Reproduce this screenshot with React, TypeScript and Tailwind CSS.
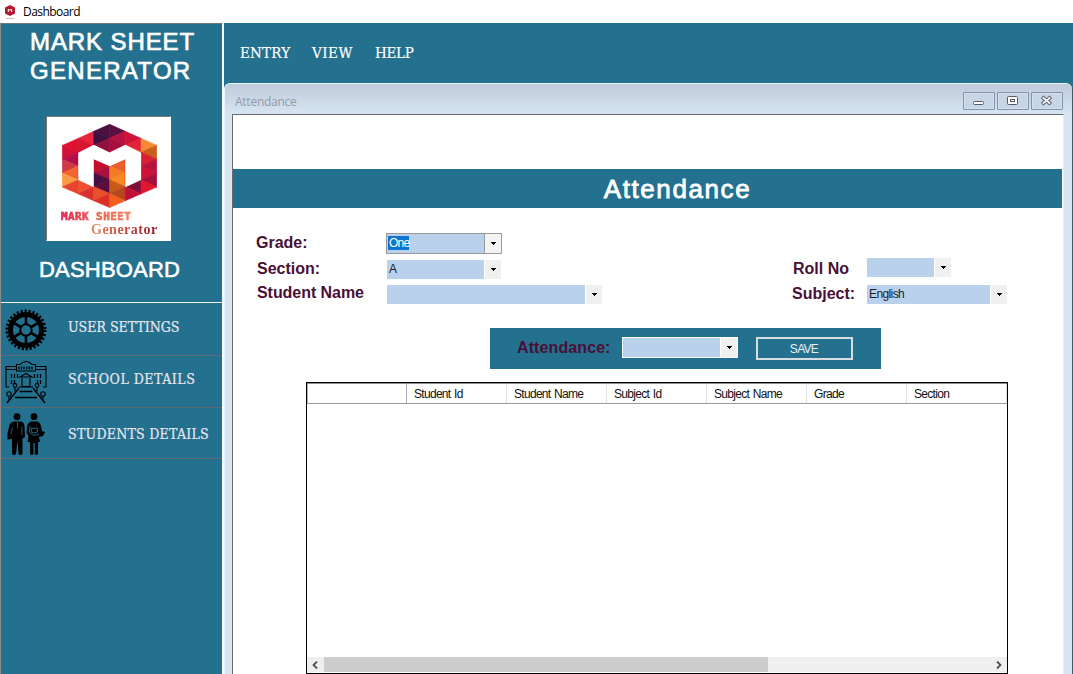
import React from "react";

const arial = "font-['Liberation_Sans',Arial,sans-serif]";
const slab = "font-['DejaVu_Serif_Condensed','DejaVu_Serif',serif] [font-stretch:condensed]";

const columnX = [96, 144, 191, 239, 286, 334, 381];
const columnTop = [120, 99, 78, 57, 78, 99, 120];
const strips: string[][] = [
  ["#df1230", "#d01236", "#b40f4a", "#cf3a48", "#f4652d", "#fb9b46", "#e8432f"],
  ["#e8253a", "#d81433", "#b91538", "#b40f4a", "#e8252f", "#e8252f", "#c62030", "#f05030", "#d93030"],
  ["#4d1040", "#3d1040", "#8f1140", "#b91240", "#c01030", "#c40f2c", "#a5103c", "#4a0f40", "#5c0d3c", "#e8502c", "#dd2f28"],
  ["#5a1040", "#b91240", "#a5103c", "#d01238", "#e01530", "#e8602c", "#f47a28", "#f58a22", "#c85a18", "#b4481c", "#f0601c"],
  ["#c81238", "#d0143c", "#e0253a", "#f0702c", "#ef6a30", "#e8252f", "#e01530", "#7c1038", "#a51038"],
  ["#f59040", "#c8601c", "#df1230", "#b91240", "#cf1038", "#e01530", "#e01530"],
];
strips[5] = ["#f58a30", "#c8601c", "#d82030", "#b91240", "#cf1038", "#a51038", "#e01530"];
strips[4] = ["#d01238", "#e0253a", "#f58a30", "#e8502c", "#e8252f", "#e8252f", "#df1230", "#7c1038", "#c01038"];

function Hexagon({ className }: { className: string }) {
  return (
    <svg viewBox="95 56 287 251" className={className} preserveAspectRatio="none">
      {strips.map((colors, s) => {
        const left = { x: columnX[s], y: columnTop[s] };
        const right = { x: columnX[s + 1], y: columnTop[s + 1] };
        const high = left.y < right.y ? left : right;
        const low = left.y < right.y ? right : left;
        const point = (k: number) =>
          k % 2 === 0 ? `${high.x},${high.y + k * 20.7}` : `${low.x},${low.y + (k - 1) * 20.7}`;
        return colors.map((c, k) => (
          <polygon key={`${s}-${k}`} points={`${point(k)} ${point(k + 1)} ${point(k + 2)}`} fill={c} stroke={c} strokeWidth="2" strokeLinejoin="round" />
        ));
      })}
      <polygon
        fill="#fff"
        points="144,142 191,118 239,141 286,118 334,142 334,223 286,245 286,161 239,182 191,161 191,245 144,223"
      />
    </svg>
  );
}

function GearIcon() {
  return (
    <svg viewBox="0 0 42 42" className="h-[42px] w-[42px]">
      <circle cx="21" cy="21" r="15.5" fill="none" stroke="#000" strokeWidth="5" />
      <circle cx="21" cy="21" r="19" fill="none" stroke="#000" strokeWidth="3" strokeDasharray="2.1 1.88" />
      <circle cx="21" cy="21" r="5.700" fill="none" stroke="#000" strokeWidth="2" />
      {[0, 60, 120, 180, 240, 300].map((a) => (
        <path key={a} d="M21 15V6" stroke="#000" strokeWidth="2.600" transform={`rotate(${a} 21 21)`} />
      ))}
    </svg>
  );
}

function SchoolIcon() {
  return (
    <svg viewBox="0 0 44 44" className="h-11 w-11" fill="none" stroke="#000" strokeWidth="1.100">
      <path d="M5 27H2V6.500H12.500V4.500H16Q22 -1.500 28 4.500H31.500V6.500H42V27H39M2 9.500H12.500M31.500 9.500H42M12.500 6V11H31.500V6" />
      <path d="M15 6.500V9.500M17.500 6.500V9.500M20 6.500V9.500M23 6.500V9.500M25.500 6.500V9.500M28 6.500V9.500" strokeWidth="1.300" />
      <path d="M7.500 14v4M10.500 14v4M13.500 14v4M30.500 14v4M33.500 14v4M36.500 14v4M7.500 20v4M10.500 20v4M33.500 20v4M36.500 20v4" strokeWidth="1.300" />
      <path d="M16 17L22 13.500L28 17ZM18 18V26.500H26V18M15 27H29" />
      <path d="M15 28L3 43M29 28L41 43" strokeWidth="1.400" />
      <path d="M15.500 31.500H28.500M11 37.500H33" strokeWidth="1.500" />
      <circle cx="11" cy="25.500" r="1.900" />
      <circle cx="33" cy="25.500" r="1.900" />
      <circle cx="5" cy="34" r="2.200" />
      <circle cx="39" cy="34" r="2.200" />
      <path d="M11 27.500v4M33 27.500v4M5 36.200v4.500M39 36.200v4.500" />
    </svg>
  );
}

function StudentsIcon() {
  return (
    <svg viewBox="0 0 40 43" className="h-[43px] w-10">
      <circle cx="11" cy="3.700" r="3.400" />
      <path d="M8 8.500H15Q18 9 18.500 13L19 23Q18.500 26 16.500 25V41Q14 43 12.500 41L11.500 27L10 41Q7.500 43 6 41V26L1.500 26.500V20L3.500 12Q4.500 9 8 8.500Z" />
      <path d="M6.500 15L5 21M15.800 14L16 22M11.500 9V15" stroke="#23708f" strokeWidth="0.800" />
      <circle cx="28" cy="3.700" r="3.400" />
      <path d="M25 8.500H31Q34 9 35 13L36 18L39 19L37 23L33 24L34 29H32V41Q30 43 28.800 41V30H27.500V41Q26 43 24 41V29H21.500L22.500 23L20.500 20L21.500 12Q22.500 9 25 8.500Z" />
      <path d="M25 15.500L31 15L31.500 19L26 20ZM24 13L23.500 19L27 22.500L33 21" fill="none" stroke="#23708f" strokeWidth="0.900" />
    </svg>
  );
}

function Combo({ width, value }: { width: string; value?: string }) {
  return (
    <div className={`flex h-[19px] shrink-0 ${width}`}>
      <div className={`h-full flex-1 bg-[#bad1eb] pl-[2px] text-[12px] leading-[19px] tracking-[-0.6px] text-[#1b1b2b] ${arial}`}>
        {value}
      </div>
      <div className="ml-px flex h-full w-4 items-center justify-center bg-[#f0f0f0]">
        <Arrow />
      </div>
    </div>
  );
}

function Arrow() {
  return (
    <svg viewBox="0 0 5 3" className="h-[3px] w-[5px]" shapeRendering="crispEdges">
      <path d="M0 0H5V1H4V2H3V3H2V2H1V1H0Z" />
    </svg>
  );
}

function Label({ children, className }: { children: React.ReactNode; className: string }) {
  return (
    <div className={`shrink-0 whitespace-nowrap text-[16px] leading-[20px] font-bold text-[#4a0f36] ${arial} ${className}`}>{children}</div>
  );
}

function WindowButton({ children }: { children: React.ReactNode }) {
  return (
    <div className="flex h-[18px] w-8 items-center justify-center rounded-[1px] border border-[#8494ae] bg-[#c8d5e4] shadow-[inset_0_0_0_1px_#d4dfec]">
      <svg viewBox="0 0 13 11" className="mr-px mb-px h-[11px] w-[13px]">{children}</svg>
    </div>
  );
}

interface MenuRowProps {
  icon: React.ReactNode;
  label: string;
  iconClass: string;
  textClass: string;
  rowClass: string;
}

function MenuRow({ icon, label, iconClass, textClass, rowClass }: MenuRowProps) {
  return (
    <div className={`flex border-b border-[#5f6a70] ${rowClass}`}>
      <div className={`w-[67px] shrink-0 ${iconClass}`}>{icon}</div>
      <div className={`whitespace-nowrap text-[14px] leading-5 text-[#e9e6ec] [-webkit-text-stroke:0.2px_#e9e6ec] ${slab} ${textClass}`}>{label}</div>
    </div>
  );
}

export default function App() {
  return (
    <div className="flex h-[674px] w-[1073px] flex-col overflow-hidden bg-white">
      <header className="flex h-[23px] shrink-0 items-center pl-1">
        <div className="flex w-[11px] flex-col items-center">
          <svg viewBox="0 0 10 11" className="h-[11px] w-[10px]">
            <path d="M5 0L10 2.500V8.500L5 11L0 8.500V2.500Z" fill="#b3182f" />
            <path d="M3.300 7V4.300L5 5.200L6.700 4.300V7" fill="none" stroke="#fff" strokeWidth="1" />
          </svg>
          <div className="mt-[2px] h-px w-2 bg-[#d9b5b5]" />
        </div>
        <span className="ml-2 text-[12px] leading-[22px] tracking-[-0.55px] text-black font-['Open_Sans','Noto_Sans',sans-serif]">Dashboard</span>
      </header>

      <div className="flex min-h-0 flex-1">
        <aside className="flex w-[223px] shrink-0 flex-col border-t border-r border-l border-t-[#6d7780] border-r-[#f4f7f9] border-l-[#8b8b8b] bg-[#23708f]">
          <div className={`pt-[3px] pl-[29px] text-[24px] leading-[29px] whitespace-nowrap text-white [-webkit-text-stroke:0.7px_white] ${arial}`}>
            <div className="tracking-[0.9px]">MARK SHEET</div>
            <div className="tracking-[1.3px]">GENERATOR</div>
          </div>
          <div className="mt-[31px] ml-[45px] flex h-[125px] w-[125px] flex-col border border-t-[#777] border-r-white border-b-white border-l-[#777] bg-white pt-[7px] pl-[14px]">
            <Hexagon className="ml-px h-[84px] w-[95px] shrink-0" />
            <div className="mt-[3px] w-[74px] bg-gradient-to-r from-[#df1050] via-[#ee684a] to-[#f39b66] bg-clip-text text-[11px] leading-[12px] font-bold tracking-[0.4px] whitespace-nowrap text-transparent [-webkit-text-stroke:0.5px_#e8486080] font-['DejaVu_Sans_Mono',monospace]">
              MARK SHEET
            </div>
            <div className="ml-[30px] w-[68px] bg-gradient-to-r from-[#e38b62] via-[#c4483e] to-[#8f1632] bg-clip-text text-[14px] leading-[14px] font-bold tracking-[0.5px] text-transparent font-['Liberation_Serif',serif]">
              Generator
            </div>
          </div>
          <div className={`mt-[14px] ml-[38px] text-[22px] leading-[30px] tracking-[0.2px] text-white [-webkit-text-stroke:0.6px_white] ${arial}`}>DASHBOARD</div>
          <div className="mt-[17px] h-px shrink-0 bg-[#eef4f7]" />
          <MenuRow rowClass="h-[53px]" iconClass="pt-[6px] pl-[4px]" textClass="pt-[14px]" icon={<GearIcon />} label="USER SETTINGS" />
          <MenuRow rowClass="h-[52px]" iconClass="pt-[4px] pl-[3px]" textClass="pt-[13px] tracking-[0.5px]" icon={<SchoolIcon />} label="SCHOOL DETAILS" />
          <MenuRow rowClass="h-[51px]" iconClass="pt-[5px] pl-[5px]" textClass="pt-[16px] tracking-[0.25px]" icon={<StudentsIcon />} label="STUDENTS DETAILS" />
        </aside>

        <main className="ml-px flex min-w-0 flex-1 flex-col bg-[#23708f]">
          <nav className={`flex h-[60px] shrink-0 pt-5 pl-4 text-[15px] leading-5 text-white [-webkit-text-stroke:0.2px_white] ${slab}`}>
            <span className="w-[72px] tracking-[0.2px]">ENTRY</span>
            <span className="w-[63px] tracking-[0.5px]">VIEW</span>
            <span className="tracking-[-0.3px]">HELP</span>
          </nav>

          <section className="mr-px flex min-h-0 flex-1 flex-col rounded-t-[6px] border-t border-l border-[#edf3f8] bg-[#d7e4f1] shadow-[1px_0_0_#4b5868]">
            <div className="flex h-[30px] shrink-0 rounded-t-[5px] bg-gradient-to-b from-[#bfcbda] to-[#d7e4f1] pr-[9px] pl-[10px]">
              <span className="pt-2 text-[12px] leading-5 tracking-[-0.25px] text-[#929ba6] font-['Open_Sans','Noto_Sans',sans-serif]">Attendance</span>
              <div className="mt-[8px] ml-auto flex gap-[2px]">
                <WindowButton>
                  <rect x="1.500" y="6.500" width="10" height="3" rx="1" fill="#fff" stroke="#555c68" />
                </WindowButton>
                <WindowButton>
                  <rect x="1.500" y="1.500" width="10" height="8" rx="1" fill="#fff" stroke="#555c68" />
                  <rect x="4.500" y="4.500" width="4" height="2" fill="#fff" stroke="#555c68" />
                </WindowButton>
                <WindowButton>
                  <path d="M3.500 3L9.500 8M9.500 3L3.500 8" stroke="#555c68" strokeWidth="3.600" strokeLinecap="square" />
                  <path d="M3.500 3L9.500 8M9.500 3L3.500 8" stroke="#fff" strokeWidth="1.800" strokeLinecap="square" />
                </WindowButton>
              </div>
            </div>

            <div className="mr-[8px] ml-[7px] flex min-h-0 flex-1 flex-col border-t border-r border-l border-t-[#696969] border-r-[#e6eef5] border-l-[#696969] bg-white">
              <div className={`mt-[54px] mr-px flex h-[39px] shrink-0 justify-center bg-[#23708f] pl-[60px] text-[26px] leading-[40px] tracking-[1.6px] text-white [-webkit-text-stroke:0.8px_white] ${arial}`}>
                Attendance
              </div>

              <div className="flex h-[120px] shrink-0 justify-between pt-[25px] pr-[56px] pl-[23px]">
                <div className="flex flex-col">
                  <div className="flex h-[21px]">
                    <Label className="w-[130px]">Grade:</Label>
                    <div className="flex h-[21px] w-[116px] border border-[#999]">
                      <div className="flex-1 bg-[#bad1eb] pt-px pl-px">
                        <span className={`mt-px block h-[14px] w-[21px] bg-[#0b76d4] pl-px text-[12px] leading-[15px] tracking-[-0.8px] text-white ${arial}`}>One</span>
                      </div>
                      <div className="flex w-[17px] items-center justify-center border-l border-[#999] bg-[#f4f4f4]">
                        <Arrow />
                      </div>
                    </div>
                  </div>
                  <div className="mt-[6px] flex h-[19px]">
                    <Label className="-mt-px ml-px w-[130px]">Section:</Label>
                    <Combo width="w-[114px]" value="A" />
                  </div>
                  <div className="mt-[6px] flex h-[19px]">
                    <Label className="-mt-[2px] ml-px w-[130px] tracking-[-0.05px]">Student Name</Label>
                    <Combo width="w-[215px]" />
                  </div>
                </div>
                <div className="flex flex-col pt-[25px]">
                  <div className="flex h-[19px]">
                    <Label className="mt-px ml-px w-[74px]">Roll No</Label>
                    <Combo width="w-[84px]" />
                  </div>
                  <div className="mt-[8px] flex h-[19px]">
                    <Label className="-mt-px w-[75px]">Subject:</Label>
                    <Combo width="w-[140px]" value="English" />
                  </div>
                </div>
              </div>

              <div className="ml-[257px] flex h-[41px] w-[391px] shrink-0 bg-[#23708f] pt-[9px] pl-[27px]">
                <Label className="mt-px w-[105px] tracking-[0.1px]">Attendance:</Label>
                <div className="flex h-[21px] w-[116px] border border-white bg-white">
                  <div className="h-full w-[97px] bg-[#bad1eb]" />
                  <div className="ml-px flex flex-1 items-center justify-center bg-[#f0f0f0]"><Arrow /></div>
                </div>
                <button className={`ml-[18px] h-[23px] w-[97px] border-2 border-[#d7dee2] pr-px text-center text-[12px] leading-[20px] tracking-[-0.7px] text-[#e8f1f5] ${arial}`}>SAVE</button>
              </div>

              <div className="mt-[13px] ml-[73px] flex h-[292px] w-[702px] shrink-0 flex-col border border-black bg-white">
                <div className={`flex h-[21px] shrink-0 border-t border-b border-t-[#8d8d8d] border-b-[#9b9b9b] text-[12px] leading-[20px] tracking-[-0.7px] text-[#111] ${arial}`}>
                  <div className="w-[100px] border-r border-l border-[#aaa]" />
                  {["Student Id", "Student Name", "Subject Id", "Subject Name", "Grade", "Section"].map((h) => (
                    <div key={h} className="w-[100px] border-r border-[#dfe3e8] pl-[7px] whitespace-nowrap [word-spacing:1px]">{h}</div>
                  ))}
                </div>
                <div className="flex-1" />
                <div className="mb-px flex h-[15px] shrink-0 bg-[#efefef]">
                  <div className="flex w-[17px] items-center justify-center pr-px">
                    <svg viewBox="0 0 6 8" className="h-2 w-1.5" fill="none" stroke="#505050" strokeWidth="1.800"><path d="M5 .5L1.500 4L5 7.500" /></svg>
                  </div>
                  <div className="w-[444px] bg-[#cdcdcd]" />
                  <div className="ml-auto flex w-[17px] items-center justify-center">
                    <svg viewBox="0 0 6 8" className="h-2 w-1.5" fill="none" stroke="#505050" strokeWidth="1.800"><path d="M1 .5L4.500 4L1 7.500" /></svg>
                  </div>
                </div>
              </div>
            </div>
          </section>
        </main>
      </div>
    </div>
  );
}
